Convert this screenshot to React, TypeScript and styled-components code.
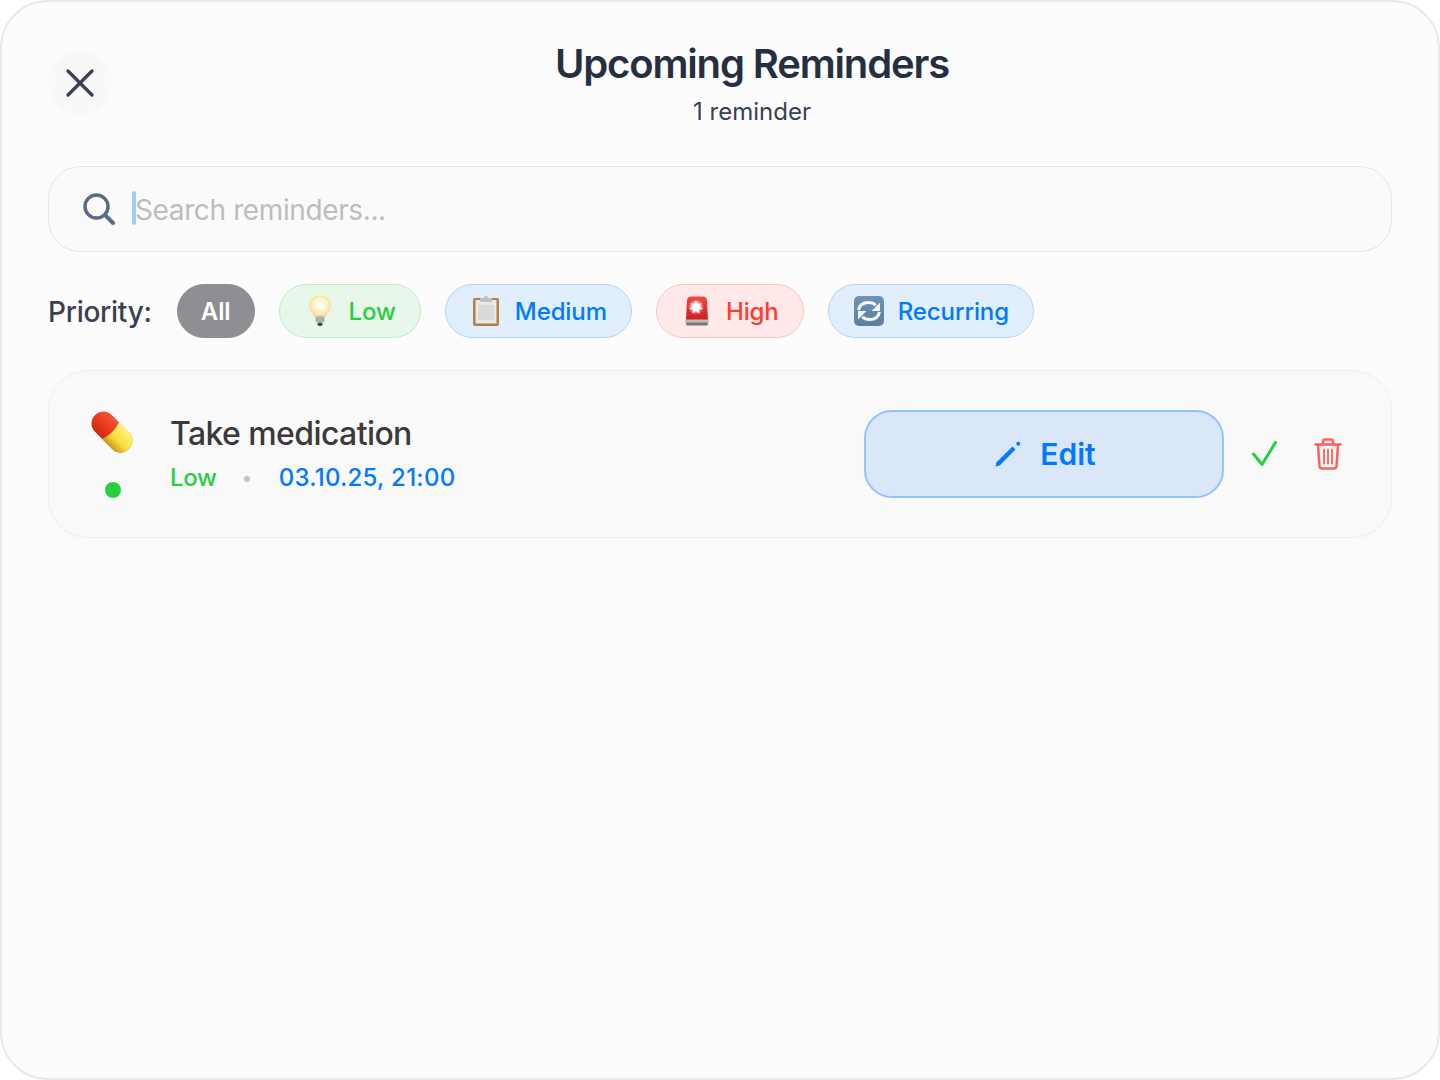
import React from "react";
import styled, { createGlobalStyle } from "styled-components";

const Global = createGlobalStyle`
  html, body { margin: 0; padding: 0; background: #ffffff; }
  * { box-sizing: border-box; }
  body { font-family: Inter, "Liberation Sans", sans-serif; }
`;

const Sheet = styled.div`
  width: 1440px;
  height: 1080px;
  background: #fcfcfc;
  border: 2px solid #e8e8e8;
  border-radius: 48px;
  padding: 38px 46px 0;
  display: flex;
  flex-direction: column;
`;

const Header = styled.header`
  display: flex;
  align-items: flex-start;
  height: 126px;
`;

const CloseButton = styled.button`
  width: 64px;
  height: 64px;
  margin-top: 11px;
  border: 0;
  padding: 0;
  border-radius: 50%;
  background: #f8f8f8;
  color: #374151;
  display: flex;
  align-items: center;
  justify-content: center;
  flex: none;
`;

const Heading = styled.div`
  flex: 1;
  display: flex;
  flex-direction: column;
  align-items: center;
`;

const Title = styled.h1`
  margin: 0;
  font-size: 40px;
  line-height: 48px;
  font-weight: 600;
  letter-spacing: -1.15px;
  color: #252f3f;
`;

const Subtitle = styled.p`
  margin: 9px 0 0;
  font-size: 24px;
  line-height: 30px;
  font-weight: 400;
  color: #374151;
`;

const SearchBox = styled.div`
  height: 86px;
  border: 1px solid #e5e5e5;
  border-radius: 32px;
  background: #fafafa;
  display: flex;
  align-items: center;
  padding: 0 34px;
  gap: 18px;
`;

const SearchIcon = styled.svg`
  flex: none;
`;

const SearchText = styled.span`
  position: relative;
  font-size: 28px;
  line-height: 34px;
  letter-spacing: -0.38px;
  color: #bdbdbd;
  padding: 2px 0 0 2px;
  &::before {
    content: "";
    position: absolute;
    left: -1px;
    top: 0;
    width: 4px;
    height: 34px;
    border-radius: 2px;
    background: #a5cdfb;
  }
`;

const FilterRow = styled.div`
  display: flex;
  align-items: center;
  gap: 24px;
  margin-top: 32px;
  height: 54px;
`;

const FilterLabel = styled.span`
  font-size: 28px;
  font-weight: 500;
  letter-spacing: -0.25px;
  color: #374151;
  padding-top: 2px;
  margin-right: 1px;
`;

const Chip = styled.div<{ $bg: string; $line: string; $fg: string }>`
  height: 54px;
  padding: 0 24px;
  border-radius: 27px;
  display: flex;
  align-items: center;
  gap: 12px;
  background: ${(p) => p.$bg};
  border: 1px solid ${(p) => p.$line};
  color: ${(p) => p.$fg};
  font-size: 24px;
  font-weight: 500;
  letter-spacing: -0.1px;
`;

const AllChip = styled(Chip)`
  font-weight: 600;
  padding: 0 23px;
`;

const ChipEmoji = styled.span`
  width: 33px;
  height: 34px;
  display: flex;
  align-items: center;
  justify-content: center;
  flex: none;
`;

const Card = styled.section`
  margin-top: 32px;
  height: 168px;
  border: 1px solid #e4f4e4;
  border-radius: 40px;
  background: #f9f9f9;
  box-shadow: 0 4px 24px rgba(0, 0, 0, 0.02);
  display: flex;
  align-items: center;
  padding: 0 31px 0 39px;
`;

const Marker = styled.div`
  width: 48px;
  display: flex;
  flex-direction: column;
  align-items: center;
  gap: 28px;
  margin-right: 34px;
  flex: none;
`;

const Dot = styled.span`
  width: 16px;
  height: 16px;
  margin-left: 2px;
  border-radius: 50%;
  background: #28cd41;
`;

const Info = styled.div`
  flex: 1;
  display: flex;
  flex-direction: column;
  gap: 9px;
  margin-bottom: 1px;
`;

const ItemTitle = styled.div`
  font-size: 32px;
  line-height: 40px;
  font-weight: 500;
  letter-spacing: -0.6px;
  color: #3a3a3c;
`;

const Meta = styled.div`
  display: flex;
  align-items: center;
  font-size: 24px;
  line-height: 30px;
  font-weight: 500;
`;

const MetaLevel = styled.span`
  color: #28cd41;
  letter-spacing: -0.3px;
`;

const MetaDate = styled.span`
  color: #007aff;
  letter-spacing: 0.27px;
`;

const Separator = styled.span`
  width: 6px;
  height: 6px;
  margin: 2px 29px 0 27px;
  border-radius: 50%;
  background: #c4c4c4;
`;

const EditButton = styled.button`
  width: 360px;
  height: 88px;
  border: 2px solid #93c3fb;
  border-radius: 28px;
  background: #dae7f8;
  color: #007aff;
  display: flex;
  align-items: center;
  justify-content: center;
  gap: 18px;
  padding: 0 0 0 2px;
  font-family: inherit;
  font-size: 30px;
  font-weight: 600;
  flex: none;
`;

const Actions = styled.div`
  display: flex;
  align-items: center;
  margin-left: 8px;
`;

const ActionIcon = styled.button`
  width: 64px;
  height: 64px;
  border: 0;
  padding: 0;
  background: transparent;
  display: flex;
  align-items: center;
  justify-content: center;
  flex: none;
`;

const Bulb = () => (
  <svg width="26" height="32" viewBox="0 0 26 32">
    <defs>
      <radialGradient id="bulbGlow" cx="0.5" cy="0.45" r="0.6">
        <stop offset="0" stopColor="#fffef6" />
        <stop offset="0.55" stopColor="#fff4c6" />
        <stop offset="1" stopColor="#f4cf78" />
      </radialGradient>
    </defs>
    <path d="M13 .5C6 .5 2 5 2 10.500c0 4.600 3.700 7 5.600 11.500h10.800C20.300 17.500 24 15.100 24 10.500 24 5 20 .5 13 .5z" fill="url(#bulbGlow)" />
    <rect x="8.500" y="21.500" width="9" height="6" rx="1.500" fill="#aeaeae" />
    <rect x="10.500" y="27.500" width="5" height="3.500" rx="1.700" fill="#4a4a4a" />
  </svg>
);

const Clipboard = () => (
  <svg width="26" height="30" viewBox="0 0 26 30">
    <rect x="0" y="2" width="26" height="28" rx="2" fill="#b5803f" />
    <rect x="2.500" y="4" width="21" height="23.500" fill="#e8e8e6" />
    <rect x="5" y="9" width="16" height="15" fill="#dadad8" />
    <rect x="7" y="2" width="12" height="4" rx="1" fill="#bcbfc3" />
    <circle cx="13" cy="2" r="2" fill="#bcbfc3" />
  </svg>
);

const Siren = () => (
  <svg width="24" height="30" viewBox="0 0 24 30">
    <defs>
      <linearGradient id="sirenBody" x1="0" y1="0" x2="0" y2="1">
        <stop offset="0" stopColor="#ee4a42" />
        <stop offset="1" stopColor="#d01c22" />
      </linearGradient>
      <radialGradient id="sirenFlash" cx="0.5" cy="0.5" r="0.5">
        <stop offset="0" stopColor="#ffffff" />
        <stop offset="0.5" stopColor="#ffd9d4" />
        <stop offset="1" stopColor="#ff8f88" stopOpacity="0" />
      </radialGradient>
    </defs>
    <path d="M2 5c0-3 1.500-4.500 4-4.500h12c2.500 0 4 1.500 4 4.500l1 19H1z" fill="url(#sirenBody)" />
    <circle cx="11" cy="11" r="8" fill="url(#sirenFlash)" />
    <path d="M11 4l1.300 5 4.700-2-3 4 4.500 1.500-5 .8 1 4.500-3.500-3.500-3.500 3.500.8-4.500-4.800-.8L8 11 5 7l4.700 2z" fill="#fff" />
    <rect x="0" y="23.500" width="24" height="3.500" rx="1.500" fill="#bdbdbd" />
    <rect x="1" y="26.500" width="22" height="3" rx="1.500" fill="#777777" />
  </svg>
);

const Refresh = () => (
  <svg width="30" height="30" viewBox="0 0 30 30">
    <defs>
      <linearGradient id="refreshBg" x1="0" y1="0" x2="0" y2="1">
        <stop offset="0" stopColor="#6e93b3" />
        <stop offset="1" stopColor="#5f7f9f" />
      </linearGradient>
    </defs>
    <rect x="0" y="0" width="30" height="30" rx="5" fill="url(#refreshBg)" />
    <path d="M4.500 14C5.500 9 9.500 6.500 14.500 6.500c3 0 5.500 1 7.200 2.800" fill="none" stroke="#f6f8fa" strokeWidth="3" />
    <path d="M26 6.500v8.500h-8.500z" fill="#f6f8fa" />
    <path d="M25.500 16C24.500 21 20.500 23.500 15.500 23.500c-3 0-5.500-1-7.200-2.800" fill="none" stroke="#f6f8fa" strokeWidth="3" />
    <path d="M4 23.500V15h8.500z" fill="#f6f8fa" />
  </svg>
);

const Pill = () => (
  <svg width="44" height="44" viewBox="0 0 44 44">
    <defs>
      <linearGradient id="pillRed" x1="0" y1="0" x2="0" y2="1">
        <stop offset="0" stopColor="#ee5a3a" />
        <stop offset="0.5" stopColor="#ec3a1e" />
        <stop offset="1" stopColor="#cf2a12" />
      </linearGradient>
      <linearGradient id="pillYellow" x1="0" y1="0" x2="0" y2="1">
        <stop offset="0" stopColor="#fff47a" />
        <stop offset="0.6" stopColor="#f9dc3a" />
        <stop offset="1" stopColor="#c9961c" />
      </linearGradient>
      <clipPath id="pillClip">
        <rect x="-24" y="-12" width="48" height="24" rx="12" />
      </clipPath>
    </defs>
    <g transform="translate(22 22) rotate(45)">
      <g clipPath="url(#pillClip)">
        <rect x="-24" y="-12" width="48" height="24" fill="url(#pillRed)" />
        <path d="M-2-12h26v24H-2c3-8 3-16 0-24z" fill="url(#pillYellow)" />
      </g>
    </g>
  </svg>
);

export default function App() {
  return (
    <>
      <Global />
      <Sheet>
        <Header>
          <CloseButton aria-label="Close">
            <svg width="28" height="28" viewBox="0 0 28 28" fill="none" stroke="currentColor" strokeWidth="3.200" strokeLinecap="round">
              <path d="M2 2l24 24M26 2L2 26" />
            </svg>
          </CloseButton>
          <Heading>
            <Title>Upcoming Reminders</Title>
            <Subtitle>1 reminder</Subtitle>
          </Heading>
        </Header>
        <SearchBox>
          <SearchIcon width="32" height="32" viewBox="0 0 32 32" fill="none" stroke="#5b6b84" strokeWidth="3.500" strokeLinecap="round">
            <circle cx="13.500" cy="13.500" r="11.500" />
            <path d="M23 23l7 7" strokeWidth="4" />
          </SearchIcon>
          <SearchText>Search reminders...</SearchText>
        </SearchBox>
        <FilterRow>
          <FilterLabel>Priority:</FilterLabel>
          <AllChip $bg="#8e8e93" $line="#8e8e93" $fg="#ffffff">All</AllChip>
          <Chip $bg="#e7f7ea" $line="#bdeec6" $fg="#28cd41"><ChipEmoji><Bulb /></ChipEmoji>Low</Chip>
          <Chip $bg="#e1eefc" $line="#b1d5fd" $fg="#007aff"><ChipEmoji><Clipboard /></ChipEmoji>Medium</Chip>
          <Chip $bg="#ffe9e8" $line="#ffc5c2" $fg="#ff3b30"><ChipEmoji><Siren /></ChipEmoji>High</Chip>
          <Chip $bg="#e1eefc" $line="#b1d5fd" $fg="#007aff"><ChipEmoji><Refresh /></ChipEmoji>Recurring</Chip>
        </FilterRow>
        <Card>
          <Marker>
            <Pill />
            <Dot />
          </Marker>
          <Info>
            <ItemTitle>Take medication</ItemTitle>
            <Meta>
              <MetaLevel>Low</MetaLevel>
              <Separator />
              <MetaDate>03.10.25, 21:00</MetaDate>
            </Meta>
          </Info>
          <EditButton>
            <svg width="28" height="28" viewBox="0 0 28 28" fill="currentColor">
              <path d="M1.500 26.500l1-4.200L18.500 6.500l3 3L5.700 25.500z" />
              <circle cx="24.300" cy="3.700" r="2" />
            </svg>
            Edit
          </EditButton>
          <Actions>
            <ActionIcon aria-label="Complete">
              <svg width="28" height="26" viewBox="0 0 28 26" fill="none" stroke="#28cd41" strokeWidth="3" strokeLinecap="round" strokeLinejoin="round">
                <path d="M3.500 13L12 23.500 25.500 1.500" />
              </svg>
            </ActionIcon>
            <ActionIcon aria-label="Delete">
              <svg width="28" height="32" viewBox="0 0 28 32" fill="none" stroke="#ff5f57" strokeWidth="2.500" strokeLinecap="round" strokeLinejoin="round">
                <path d="M1.500 6.500h25M9 6.500V3.500c0-1 .8-2 2-2h6c1.200 0 2 1 2 2v3" />
                <path d="M4 7l1.500 21c.1 1.500 1 2.500 2.500 2.500h12c1.500 0 2.400-1 2.500-2.500L24 7" />
                <path d="M10 11.500v14M14 11.500v14M18 11.500v14" strokeWidth="1.800" />
              </svg>
            </ActionIcon>
          </Actions>
        </Card>
      </Sheet>
    </>
  );
}
